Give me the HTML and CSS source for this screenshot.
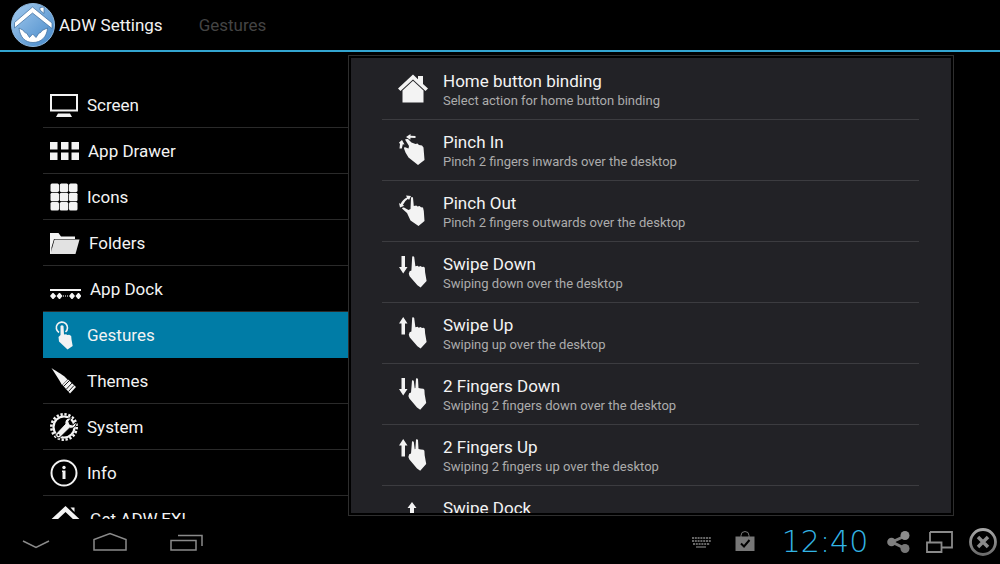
FILE: index.html
```html
<!DOCTYPE html>
<html lang="en">
<head>
  <meta charset="UTF-8" />
  <meta name="viewport" content="width=device-width, initial-scale=1.0"/>
  <title>ADW Settings</title>
  <link rel="stylesheet" href="styles.css">
</head>
<body>

  <!-- Shared icon shapes -->
  <svg class="defs" width="0" height="0" aria-hidden="true">
    <defs>
      <linearGradient id="blue" x1="0" y1="0" x2="1" y2="1">
        <stop offset="0" stop-color="#a4cbee"/>
        <stop offset="1" stop-color="#4487c8"/>
      </linearGradient>
      <linearGradient id="metal" x1="0" y1="0" x2="0" y2="1">
        <stop offset="0" stop-color="#a6a6a6"/>
        <stop offset="1" stop-color="#6c6c6c"/>
      </linearGradient>
      <path id="arrow-down" d="M3.500 0h3.500v11h2.500L5.200 17.500 1 11h2.500z"/>
      <path id="arrow-up" d="M5.200 0l4.300 6.500H7V17.500H3.500v-11H1z"/>
      <path id="hand" d="M14.200 0.500q1.200-.9 2 .4l1.200 9.300 2.300-.4 1 .9 2-.7 1.200 1.100 2-.4.9 1 .3 4.600 1.500 8.700-6 6.600-3.200-2.300-7.800-9.100-.8-2.400.8-2.600 1.800-.7z"/>
      <path id="hand-two" d="M14 2.500q1-.9 1.800.4l.9 7.300.7-.2.600-9.400q1.200-1 2 .3l.5 9.200 2.400.5 2.500.2 1 1 .3 4.600 1.500 8.700-6 6.600-3.200-2.300-7.800-9.100-.8-2.400.8-2.600 1.800-.7z"/>
    </defs>
  </svg>

  <header class="action-bar">
    <svg class="logo" width="44" height="44" viewBox="0 0 44 44">
      <circle cx="22" cy="22" r="21.500" fill="url(#blue)" stroke="#8fb8de"/>
      <path d="M3.500 19.500L21.500 4 41 20v5.500L21.500 10 3.500 25z" fill="#fff" stroke="#3a6a9c" stroke-width=".7"/>
      <path d="M29 4.500l4-.5v6.500l-4-3.500z" fill="#fff" stroke="#3a6a9c" stroke-width=".7"/>
      <path d="M8 25l4.500 2.500c.5 1.500 1.500 2.500 3 2.500l3 4.500 3.200-3.500 3.300 3.500 3-4.500c1.500 0 2.500-1 3-2.500L36.500 25C36 34 30 39.500 22 39.500S9 34 8 25z" fill="#fff" stroke="#3a6a9c" stroke-width=".7"/>
    </svg>
    <h1>ADW Settings</h1>
    <span class="crumb">Gestures</span>
  </header>

  <main class="settings">

    <!-- Left: categories -->
    <nav class="categories">
      <a href="#">
        <svg width="28" height="23" viewBox="0 0 28 23">
          <path d="M1 1h26v15.500H1z" fill="none" stroke="currentColor" stroke-width="2"/>
          <path d="M8 19.500h12l2 3.500H6z"/>
        </svg>
        Screen
      </a>
      <a href="#">
        <svg width="29" height="18" viewBox="0 0 29 18">
          <path d="M0 0h7.500v7.500H0zM11 0h7.500v7.500H11zM21.500 0H29v7.500h-7.500zM0 10.500h7.500V18H0zM11 10.500h7.500V18H11zM21.500 10.500H29V18h-7.500z"/>
        </svg>
        App Drawer
      </a>
      <a href="#">
        <svg width="28" height="28" viewBox="0 0 28 28">
          <rect x="0.500" y="0.500" width="8.500" height="8.500" rx="1.500"/>
          <rect x="9.750" y="0.500" width="8.500" height="8.500" rx="1.500"/>
          <rect x="19" y="0.500" width="8.500" height="8.500" rx="1.500"/>
          <rect x="0.500" y="9.750" width="8.500" height="8.500" rx="1.500"/>
          <rect x="9.750" y="9.750" width="8.500" height="8.500" rx="1.500"/>
          <rect x="19" y="9.750" width="8.500" height="8.500" rx="1.500"/>
          <rect x="0.500" y="19" width="8.500" height="8.500" rx="1.500"/>
          <rect x="9.750" y="19" width="8.500" height="8.500" rx="1.500"/>
          <rect x="19" y="19" width="8.500" height="8.500" rx="1.500"/>
        </svg>
        Icons
      </a>
      <a href="#">
        <svg width="30" height="21" viewBox="0 0 30 21">
          <path d="M0 0h8.500l2.500 3.500h14V6H4L1.500 14.500V21H0z"/>
          <path d="M4.500 6.500H29.500L25.500 21H0.500z" fill="#e2e2e2"/>
        </svg>
        Folders
      </a>
      <a href="#">
        <svg class="dock" width="31" height="10" viewBox="0 0 31 10">
          <path d="M0 0h31v2H0z"/>
          <path d="M2.500 4h1L6.200 7 3.500 10h-1L0 7zM9 4h1l2.500 3-2.500 3H9L6.500 7zM21.500 4h1L25 7l-2.500 3h-1L19 7zM28 4h1l2.500 3L29 10h-1l-2.500-3z"/>
          <path d="M13 6h1v2h-1zM15 6h1v2h-1zM17 6h1v2h-1z" fill="#888"/>
        </svg>
        App Dock
      </a>
      <a href="#" class="selected" aria-current="page">
        <svg width="28" height="30" viewBox="0 0 28 30">
          <path d="M9 12.500A5.600 5.600 0 1 1 15.500 12" fill="none" stroke="currentColor" stroke-width="1.600"/>
          <path d="M10.500 6q1.500-1.600 3 0l.5 8.500 2.200-.3 1 .7 2-.2 2 1.300.3 3.500 1.200 6.500-5.200 3.500-8.500-8-.5-4.500 2-2z"/>
        </svg>
        Gestures
      </a>
      <a href="#">
        <svg width="28" height="26" viewBox="0 0 28 26">
          <path d="M1.500 0C7 4 14 7 17.500 11.500l-5.500 5.500C9 11 5 6 1.500 0z"/>
          <path d="M18 11.500l8 7.500-6 6.500-7.500-8.500z"/>
          <path d="M19.500 12.500l-6 6M22 15l-5.500 6M24 17.500l-5.500 6" stroke="#000" stroke-width=".9"/>
        </svg>
        Themes
      </a>
      <a href="#">
        <svg width="28" height="28" viewBox="0 0 28 28">
          <circle cx="14" cy="14" r="10.500" fill="none" stroke="currentColor" stroke-width="2.200"/>
          <circle cx="14" cy="14" r="12.700" fill="none" stroke="currentColor" stroke-width="2.600" stroke-dasharray="2.300 1.690"/>
          <path d="M6 20.500L15 11c-.5-4 2-6.500 6.500-6l-2.800 3.300 1 3 3 .7L26 9c.7 4-2.500 7-6.500 6.200L10 24.500C7.500 26 4.500 23 6 20.500z" stroke="#000" stroke-width="1"/>
          <circle cx="8.500" cy="22" r="1" fill="#000"/>
        </svg>
        System
      </a>
      <a href="#">
        <svg width="28" height="28" viewBox="0 0 28 28">
          <circle cx="14" cy="14" r="12.500" fill="none" stroke="currentColor" stroke-width="2"/>
          <circle cx="14" cy="8.500" r="1.700"/>
          <path d="M12 11.500h3.500V20h-3v-7H12z"/>
        </svg>
        Info
      </a>
      <a href="#">
        <svg width="31" height="29" viewBox="0 0 31 29">
          <path d="M0 15.500L15.500 1 31 15.500h-6.500L15.500 7 6.500 15.500z"/>
          <path d="M20.500 2.500h4v4.500z"/>
          <path d="M15.500 14L26 22v7H5v-7z"/>
        </svg>
        Get ADW.EX!
      </a>
    </nav>

    <!-- Right: gesture preferences -->
    <section class="panel">
      <ul class="prefs">
        <li>
          <svg width="30" height="32" viewBox="0 0 30 32">
            <path d="M15 1.500l5 4.700V3h5v8l5 4.500-2.500 2.500L15 6.500 2.500 18 0 15.500z"/>
            <path d="M15 7.800l10.500 9.600v12.100h-21V17.400z"/>
          </svg>
          <a href="#">Home button binding<small>Select action for home button binding</small></a>
        </li>
        <li>
          <svg width="30" height="32" viewBox="0 0 30 32">
            <path d="M8 3L12.500 0v1.800l5 .2v2l-5-.2-.2 2zM1 8.500L4 6l2.500 4.500-1.700-.3-1 4.300H1.500L2 10z"/>
            <path d="M7 5.500q1-1 3-.4L13.500 8.500l4 1.500 2-.5 1.500 1.500 3 .5 1.500 2L26.500 26 20 31l-9.500-7.500-3-5-1.500-4 .5-1.500 4 1.500.5-2.500z"/>
          </svg>
          <a href="#">Pinch In<small>Pinch 2 fingers inwards over the desktop</small></a>
        </li>
        <li>
          <svg width="30" height="32" viewBox="0 0 30 32">
            <path d="M2.500 9Q5 4 9 2.500L8 0.500l5 .5-2 4-1-1.200Q6.500 6 4.800 10l1.500.7L2 12.500 1 8z"/>
            <path d="M13 2.500q1.500-1 2 .3l.8 8.200 2.500-.5 1.200 1 2-.5 1.500 1.200 2 .3.8 3.500L26.500 26l-6 5-8-5.500-3.500-7.500-5-4.500q.5-1.500 2-1l4.500 2.500 2-1z"/>
          </svg>
          <a href="#">Pinch Out<small>Pinch 2 fingers outwards over the desktop</small></a>
        </li>
        <li>
          <svg width="30" height="32" viewBox="0 0 30 32"><use href="#arrow-down"/><use href="#hand"/></svg>
          <a href="#">Swipe Down<small>Swiping down over the desktop</small></a>
        </li>
        <li>
          <svg width="30" height="32" viewBox="0 0 30 32"><use href="#arrow-up"/><use href="#hand"/></svg>
          <a href="#">Swipe Up<small>Swiping up over the desktop</small></a>
        </li>
        <li>
          <svg width="30" height="32" viewBox="0 0 30 32"><use href="#arrow-down"/><use href="#hand-two"/></svg>
          <a href="#">2 Fingers Down<small>Swiping 2 fingers down over the desktop</small></a>
        </li>
        <li>
          <svg width="30" height="32" viewBox="0 0 30 32"><use href="#arrow-up"/><use href="#hand-two"/></svg>
          <a href="#">2 Fingers Up<small>Swiping 2 fingers up over the desktop</small></a>
        </li>
        <li>
          <svg width="30" height="32" viewBox="0 0 30 32">
            <path d="M14 2l4.500 6H16v9h-4V8H9.500z"/>
            <path d="M2 22h26v3H2z"/>
          </svg>
          <a href="#">Swipe Dock</a>
        </li>
      </ul>
    </section>
  </main>

  <!-- System bar -->
  <footer class="system-bar">
    <div class="nav-keys">
      <button aria-label="Back">
        <svg width="28" height="20" viewBox="0 0 28 20"><path d="M1 9l13 6.500L27 9"/></svg>
      </button>
      <button aria-label="Home">
        <svg width="34" height="20" viewBox="0 0 34 20"><path d="M1 18V7.500l16-6 16 6V18z"/></svg>
      </button>
      <button aria-label="Recent apps">
        <svg width="33" height="20" viewBox="0 0 33 20"><path d="M1 8.500h25V18H1zM8 3.500h24V14"/></svg>
      </button>
    </div>
    <div class="tray">
      <svg width="19" height="20" viewBox="0 0 19 20">
        <path d="M0 6h19M0 9h19M1 12h17" stroke="#666" stroke-width="2" stroke-dasharray="2 .8"/>
        <path d="M4 15h10" stroke="#666" stroke-width="1.500"/>
      </svg>
      <svg width="20" height="22" viewBox="0 0 20 22">
        <path d="M6 6V4.500a4 4 0 0 1 8 0V6" fill="none" stroke="#777"/>
        <path d="M0.500 5.500h19V20H0.500z" fill="#777"/>
        <path d="M6 12.500l3 3 5.500-6.500" fill="none" stroke="#000" stroke-width="2"/>
      </svg>
      <time class="clock">12:40</time>
    </div>
    <div class="tools">
      <button aria-label="Share">
        <svg width="23" height="22" viewBox="0 0 23 22">
          <path d="M18 5L5 11l13 6.500" fill="none" stroke="#7c7c7c" stroke-width="3"/>
          <circle cx="18" cy="4.500" r="4.500" fill="#8c8c8c"/><circle cx="4.500" cy="11" r="4.300" fill="#808080"/><circle cx="18" cy="17.500" r="4.500" fill="#777"/>
        </svg>
      </button>
      <button aria-label="Windows">
        <svg width="27" height="22" viewBox="0 0 27 22">
          <path d="M4 1h22v15.500H16M4 1v10M1 11.500h14.500V21H1z" fill="none" stroke="#8a8a8a" stroke-width="1.800"/>
        </svg>
      </button>
      <button aria-label="Close">
        <svg width="28" height="28" viewBox="0 0 28 28">
          <circle cx="14" cy="14" r="12.500" fill="none" stroke="url(#metal)" stroke-width="2.800"/>
          <path d="M9 9l10 10M19 9L9 19" stroke="#8a8a8a" stroke-width="3.500"/>
        </svg>
      </button>
    </div>
  </footer>

</body>
</html>
```

FILE: styles.css
```css
* {
  box-sizing: border-box;
}
body {
  margin: 0;
  height: 100vh;
  display: flex;
  flex-direction: column;
  background: #000;
  color: #f3f3f3;
  font-family: Roboto, sans-serif;
  font-size: 17px;
  overflow: hidden;
}
svg {
  display: block;
  flex: none;
  fill: currentColor;
}
.defs {
  position: absolute;
}
a {
  color: inherit;
  text-decoration: none;
}
button {
  padding: 0;
  border: none;
  background: transparent;
  color: #8a8a8a;
  cursor: pointer;
}

/* Top bar */
.action-bar {
  display: flex;
  align-items: center;
  gap: 4px;
  height: 52px;
  padding: 0 11px;
  border-bottom: 2px solid #33a5d0;
}
h1 {
  margin: 0;
  font-size: 17px;
  font-weight: 400;
}
.crumb {
  margin-left: 32px;
  color: #444;
}

/* Two columns */
.settings {
  flex: 1;
  min-height: 0;
  display: grid;
  grid-template-columns: 305px 1fr;
  padding: 0 46px 0 43px;
}
.categories {
  padding-top: 30px;
  overflow: hidden;
}
.categories a {
  display: flex;
  align-items: center;
  gap: 9px;
  height: 46px;
  padding: 1px 7px 0;
  border-bottom: 1px solid #2a2a2a;
}
.categories .selected {
  background: #007ca6;
  border-bottom-color: #007ca6;
}
.dock {
  margin-top: 10px;
}
.panel {
  margin: 3px 0;
  padding: 2px;
  border: 1px solid #2e2e2e;
  min-height: 0;
}
.prefs {
  height: 100%;
  margin: 0;
  padding: 1px 32px 0 31px;
  list-style: none;
  background: #222226;
  overflow: hidden;
}
.prefs li {
  display: flex;
  gap: 15px;
  height: 61px;
  padding: 12px 0 0 16px;
  border-bottom: 1px solid #3c3c40;
}
.prefs svg {
  margin-top: 2px;
}
.prefs a {
  line-height: 20px;
}
.prefs small {
  display: block;
  color: #acacac;
  font-size: 13px;
}

/* Bottom bar */
.system-bar {
  display: flex;
  align-items: center;
  height: 45px;
  padding: 0 3px 0 22px;
}
.nav-keys,
.tray,
.tools {
  display: flex;
  align-items: center;
}
.nav-keys {
  gap: 43px;
}
.nav-keys svg {
  fill: none;
  stroke: #8a8a8a;
  stroke-width: 1.5;
}
.tray {
  gap: 24px;
  margin-left: auto;
  margin-right: 16px;
}
.tools {
  gap: 16px;
}
.clock {
  min-width: 92px;
  color: #33b5e5;
  font-family: "DejaVu Sans", sans-serif;
  font-size: 30px;
  font-weight: 200;
  line-height: 1;
  text-align: center;
}
```
